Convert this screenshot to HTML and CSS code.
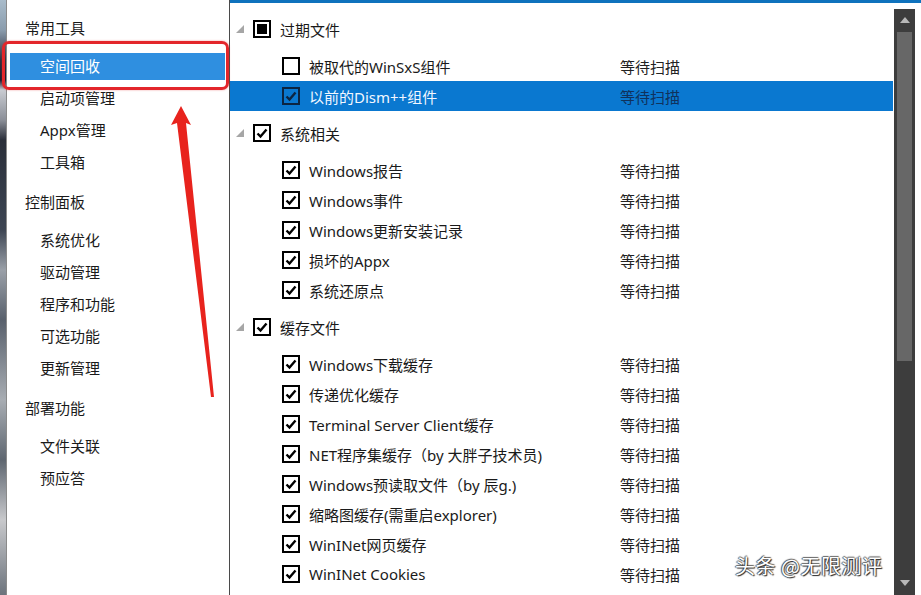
FILE: index.html
```html
<!doctype html>
<html lang="zh-CN">
  <head>
    <meta charset="UTF-8" />
    <title>Dism++ 空间回收</title>
    <link rel="stylesheet" href="styles.css">
  </head>
  <body>
    <div class="window">
      <div class="desk"></div>

      <nav class="sidebar">
        <div class="nav-head">常用工具</div>
        <div class="nav-item active">空间回收</div>
        <div class="nav-item">启动项管理</div>
        <div class="nav-item">Appx管理</div>
        <div class="nav-item">工具箱</div>

        <div class="nav-head">控制面板</div>
        <div class="nav-item">系统优化</div>
        <div class="nav-item">驱动管理</div>
        <div class="nav-item">程序和功能</div>
        <div class="nav-item">可选功能</div>
        <div class="nav-item">更新管理</div>

        <div class="nav-head">部署功能</div>
        <div class="nav-item">文件关联</div>
        <div class="nav-item">预应答</div>
      </nav>

      <main class="content">
        <div class="tree">
          <!-- 过期文件 -->
          <div class="group">
            <svg class="twisty" width="8" height="8" viewBox="0 0 8 8"><polygon points="8,0 8,8 0,8" /></svg>
            <span class="box mixed"><i></i></span>
            <span class="label">过期文件</span>
          </div>
          <div class="row">
            <span class="box"></span>
            <span class="label">被取代的WinSxS组件</span>
            <span class="status">等待扫描</span>
          </div>
          <div class="row selected">
            <span class="box checked"><svg viewBox="0 0 14 14"><path d="M2.5 7.5 L5.5 10.5 L11.5 3.5" /></svg></span>
            <span class="label">以前的Dism++组件</span>
            <span class="status">等待扫描</span>
          </div>

          <!-- 系统相关 -->
          <div class="group">
            <svg class="twisty" width="8" height="8" viewBox="0 0 8 8"><polygon points="8,0 8,8 0,8" /></svg>
            <span class="box checked"><svg viewBox="0 0 14 14"><path d="M2.5 7.5 L5.5 10.5 L11.5 3.5" /></svg></span>
            <span class="label">系统相关</span>
          </div>
          <div class="row">
            <span class="box checked"><svg viewBox="0 0 14 14"><path d="M2.5 7.5 L5.5 10.5 L11.5 3.5" /></svg></span>
            <span class="label">Windows报告</span>
            <span class="status">等待扫描</span>
          </div>
          <div class="row">
            <span class="box checked"><svg viewBox="0 0 14 14"><path d="M2.5 7.5 L5.5 10.5 L11.5 3.5" /></svg></span>
            <span class="label">Windows事件</span>
            <span class="status">等待扫描</span>
          </div>
          <div class="row">
            <span class="box checked"><svg viewBox="0 0 14 14"><path d="M2.5 7.5 L5.5 10.5 L11.5 3.5" /></svg></span>
            <span class="label">Windows更新安装记录</span>
            <span class="status">等待扫描</span>
          </div>
          <div class="row">
            <span class="box checked"><svg viewBox="0 0 14 14"><path d="M2.5 7.5 L5.5 10.5 L11.5 3.5" /></svg></span>
            <span class="label">损坏的Appx</span>
            <span class="status">等待扫描</span>
          </div>
          <div class="row">
            <span class="box checked"><svg viewBox="0 0 14 14"><path d="M2.5 7.5 L5.5 10.5 L11.5 3.5" /></svg></span>
            <span class="label">系统还原点</span>
            <span class="status">等待扫描</span>
          </div>

          <!-- 缓存文件 -->
          <div class="group">
            <svg class="twisty" width="8" height="8" viewBox="0 0 8 8"><polygon points="8,0 8,8 0,8" /></svg>
            <span class="box checked"><svg viewBox="0 0 14 14"><path d="M2.5 7.5 L5.5 10.5 L11.5 3.5" /></svg></span>
            <span class="label">缓存文件</span>
          </div>
          <div class="row">
            <span class="box checked"><svg viewBox="0 0 14 14"><path d="M2.5 7.5 L5.5 10.5 L11.5 3.5" /></svg></span>
            <span class="label">Windows下载缓存</span>
            <span class="status">等待扫描</span>
          </div>
          <div class="row">
            <span class="box checked"><svg viewBox="0 0 14 14"><path d="M2.5 7.5 L5.5 10.5 L11.5 3.5" /></svg></span>
            <span class="label">传递优化缓存</span>
            <span class="status">等待扫描</span>
          </div>
          <div class="row">
            <span class="box checked"><svg viewBox="0 0 14 14"><path d="M2.5 7.5 L5.5 10.5 L11.5 3.5" /></svg></span>
            <span class="label">Terminal Server Client缓存</span>
            <span class="status">等待扫描</span>
          </div>
          <div class="row">
            <span class="box checked"><svg viewBox="0 0 14 14"><path d="M2.5 7.5 L5.5 10.5 L11.5 3.5" /></svg></span>
            <span class="label">NET程序集缓存（by 大胖子技术员)</span>
            <span class="status">等待扫描</span>
          </div>
          <div class="row">
            <span class="box checked"><svg viewBox="0 0 14 14"><path d="M2.5 7.5 L5.5 10.5 L11.5 3.5" /></svg></span>
            <span class="label">Windows预读取文件（by 辰g.)</span>
            <span class="status">等待扫描</span>
          </div>
          <div class="row">
            <span class="box checked"><svg viewBox="0 0 14 14"><path d="M2.5 7.5 L5.5 10.5 L11.5 3.5" /></svg></span>
            <span class="label">缩略图缓存(需重启explorer)</span>
            <span class="status">等待扫描</span>
          </div>
          <div class="row">
            <span class="box checked"><svg viewBox="0 0 14 14"><path d="M2.5 7.5 L5.5 10.5 L11.5 3.5" /></svg></span>
            <span class="label">WinINet网页缓存</span>
            <span class="status">等待扫描</span>
          </div>
          <div class="row">
            <span class="box checked"><svg viewBox="0 0 14 14"><path d="M2.5 7.5 L5.5 10.5 L11.5 3.5" /></svg></span>
            <span class="label">WinINet Cookies</span>
            <span class="status">等待扫描</span>
          </div>
        </div>

        <div class="scrollbar">
          <svg class="arrow-btn" width="10" height="6" viewBox="0 0 10 6"><polygon points="5,0 10,6 0,6" /></svg>
          <div class="thumb"></div>
          <div class="track"></div>
          <svg class="arrow-btn" width="10" height="6" viewBox="0 0 10 6"><polygon points="0,0 10,0 5,6" /></svg>
        </div>
      </main>
    </div>

    <!-- annotation drawn over the screenshot -->
    <div class="callout"></div>
    <svg class="pointer" width="921" height="595" viewBox="0 0 921 595">
      <polygon points="181,106 191,125 186,123 214,397 211,397 177,123 171,125" />
    </svg>

    <div class="watermark">头条 @无限测评</div>
  </body>
</html>
```

FILE: styles.css
```css
html,
body {
  margin: 0;
  padding: 0;
}

body {
  width: 921px;
  height: 595px;
  overflow: hidden;
  position: relative;
  font-family: "Noto Sans", "Noto Sans CJK SC", sans-serif;
  font-size: 15px;
  color: #1a1a1a;
  background: #fff;
}

.window {
  display: flex;
  height: 595px;
}

.desk {
  width: 6px;
  flex: none;
  background: linear-gradient(
    180deg,
    #a9bccb 0px,
    #8a9cad 30px,
    #2d3140 60px,
    #151a2e 80px,
    #c9ccd2 90px,
    #8b8f98 120px,
    #2a2f3a 140px,
    #3d4553 230px,
    #9aa0a8 270px,
    #58606c 320px,
    #a8adb3 400px,
    #5e6670 460px,
    #c8c9cc 520px,
    #6c737c 595px
  );
}

/* left navigation */
.sidebar {
  width: 222px;
  flex: none;
  border-left: 1px solid #8a8a8a;
  border-right: 1px solid #4a4a4a;
  padding-top: 12px;
}

.nav-head {
  height: 32px;
  line-height: 32px;
  padding-left: 18px;
  margin-top: 10px;
  margin-bottom: 9px;
}

.nav-head:first-child {
  margin-top: 0;
}

.nav-item {
  height: 27px;
  line-height: 27px;
  margin: 0 4px 5px 3px;
  padding-left: 30px;
}

.nav-item.active {
  background: #2f8fe0;
  color: #fff;
}

/* right tree */
.content {
  flex: 1;
  display: flex;
  border-top: 3px solid #0f72bd;
}

.tree {
  flex: 1;
  padding-top: 4px;
}

.group {
  height: 44px;
  display: flex;
  align-items: center;
}

.twisty {
  margin-left: 6px;
  margin-right: 9px;
  fill: #a6a6a6;
}

.group .label {
  margin-left: 9px;
}

.row {
  height: 30px;
  display: flex;
  align-items: center;
  padding-left: 52px;
}

.row .label {
  margin-left: 9px;
  width: 311px;
  white-space: nowrap;
}

.status {
  color: #222;
}

.box {
  width: 18px;
  height: 18px;
  box-sizing: border-box;
  border: 2px solid #000;
  background: #fff;
  flex: none;
  display: flex;
  align-items: center;
  justify-content: center;
}

.box svg {
  width: 14px;
  height: 14px;
  fill: none;
  stroke: #000;
  stroke-width: 2.4;
}

.box.mixed i {
  width: 10px;
  height: 10px;
  background: #000;
}

.row.selected {
  background: #0a78d0;
}

.row.selected .label {
  color: #f2f7ff;
}

.row.selected .status {
  color: #10325c;
}

.row.selected .box {
  background: transparent;
  border-color: #0c2542;
}

.row.selected .box svg {
  stroke: #0c2542;
}

/* scrollbar */
.scrollbar {
  width: 21px;
  margin: 6px 6px 0 1px;
  background: #3d3d3d;
  display: flex;
  flex-direction: column;
  align-items: center;
}

.arrow-btn {
  fill: #b8b8b8;
  margin: 8px 0 9px;
}

.thumb {
  width: 15px;
  height: 329px;
  background: #676767;
}

.track {
  flex: 1;
}

/* annotation overlay */
.callout {
  position: absolute;
  left: 2px;
  top: 41px;
  width: 221px;
  height: 43px;
  border: 3px solid #e3262b;
  border-radius: 7px;
  box-shadow: 0 0 2px rgba(227, 38, 43, 0.5);
}

.pointer {
  position: absolute;
  left: 0;
  top: 0;
  fill: #e8231d;
}

.watermark {
  position: absolute;
  left: 735px;
  top: 551px;
  font-family: "Noto Sans CJK SC", sans-serif;
  font-size: 20px;
  color: #fff;
  text-shadow: 1px 1px 1px #222, -1px 0 1px #444, 0 -1px 1px #666;
  letter-spacing: 0.5px;
}
```
